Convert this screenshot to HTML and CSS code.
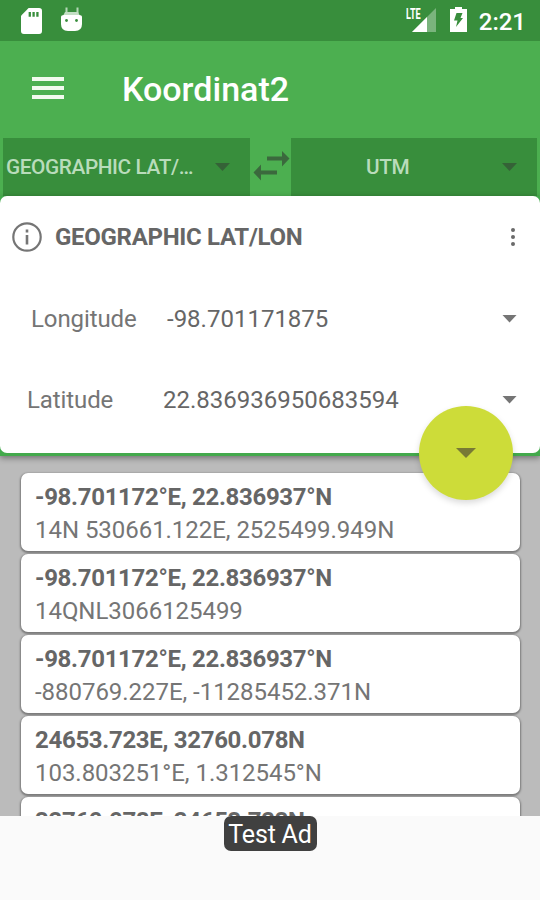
FILE: index.html
```html
<!DOCTYPE html>
<html lang="en">
<head>
    <meta charset="UTF-8">
    <meta name="viewport" content="width=device-width, initial-scale=1.0">
    <title>Koordinat2</title>
    <link rel="stylesheet" href="styles.css">
</head>
<body>
    <!-- Status bar -->
    <div class="status-bar">
        <svg class="sd-icon" width="21" height="26" viewBox="0 0 22 27">
            <path d="M8 0h11a3 3 0 0 1 3 3v21a3 3 0 0 1-3 3H3a3 3 0 0 1-3-3V8z" fill="#fff"/>
            <path d="M8 4h2.400v5H8zM12 4h2.400v5H12zM16 4h2.400v5H16z" fill="#388e3c"/>
        </svg>
        <svg class="robot-icon" width="21" height="25" viewBox="0 0 21 25">
            <path d="M5.500 0.500v6M16.500 0.500v6" stroke="#b5d8b7" stroke-width="2"/>
            <path d="M4 5h13l2 4H2z" fill="#c3dfc4"/>
            <path d="M0 10q0-2 3-2h15q3 0 3 2v7q0 7-7 7H7q-7 0-7-7z" fill="#fff"/>
            <circle cx="5.500" cy="13.500" r="1.400" fill="#388e3c"/>
            <circle cx="15.500" cy="13.500" r="1.400" fill="#388e3c"/>
        </svg>
        <div class="signal">
            <span class="lte">LTE</span>
            <svg width="24" height="24" viewBox="0 0 24 24">
                <path d="M24 0v24H0z" fill="#7ab47d"/>
                <path d="M15 9v15H0z" fill="#fff"/>
            </svg>
        </div>
        <svg class="battery-icon" width="17" height="25" viewBox="0 0 17 25">
            <path d="M5 0h7v2h5v23H0V2h5z" fill="#fff"/>
            <path d="M6.500 6h6l-2 5H13L6 20l1.500-6.500H4z" fill="#388e3c"/>
        </svg>
        <span class="clock">2:21</span>
    </div>

    <!-- Toolbar -->
    <div class="toolbar">
        <div class="menu-icon"><span></span><span></span><span></span></div>
        <h1>Koordinat2</h1>
    </div>

    <!-- Coordinate system pickers -->
    <div class="pickers">
        <div class="picker picker-from">
            <span class="picker-text">GEOGRAPHIC LAT/…</span>
            <span class="arrow"></span>
        </div>
        <svg class="swap-icon" width="37" height="30" viewBox="0 0 37 30">
            <path d="M14 7.500h16M7 21.500h17" stroke="#3b693d" stroke-width="4"/>
            <path d="M29 0l7.500 7.500-7.500 8zM8 13.500v16l-7.500-8z" fill="#3b693d"/>
        </svg>
        <div class="picker picker-to">
            <span class="picker-text">UTM</span>
            <span class="arrow"></span>
        </div>
    </div>

    <!-- Input card -->
    <div class="input-wrap">
        <div class="input-card">
            <div class="card-header">
                <svg width="30" height="30" viewBox="0 0 30 30">
                    <circle cx="15" cy="15" r="13.700" fill="none" stroke="#757575" stroke-width="2.200"/>
                    <path d="M15 13v9.500M15 7.500v3" stroke="#757575" stroke-width="2.600"/>
                </svg>
                <h2>GEOGRAPHIC LAT/LON</h2>
                <div class="more"><i></i><i></i><i></i></div>
            </div>
            <div class="field longitude">
                <label>Longitude</label>
                <span class="value">-98.701171875</span>
                <span class="arrow"></span>
            </div>
            <div class="field latitude">
                <label>Latitude</label>
                <span class="value">22.836936950683594</span>
                <span class="arrow"></span>
            </div>
        </div>
        <div class="fab"><span class="arrow"></span></div>
    </div>

    <!-- History -->
    <div class="history">
        <div class="item">
            <b>-98.701172°E, 22.836937°N</b>
            <span>14N 530661.122E, 2525499.949N</span>
        </div>
        <div class="item">
            <b>-98.701172°E, 22.836937°N</b>
            <span>14QNL3066125499</span>
        </div>
        <div class="item">
            <b>-98.701172°E, 22.836937°N</b>
            <span>-880769.227E, -11285452.371N</span>
        </div>
        <div class="item">
            <b>24653.723E, 32760.078N</b>
            <span>103.803251°E, 1.312545°N</span>
        </div>
        <div class="item">
            <b>32760.078E, 24653.723N</b>
        </div>
    </div>

    <div class="ad">
        <span>Test Ad</span>
    </div>
</body>
</html>
```
FILE: styles.css
```css
* {
    box-sizing: border-box;
}
body {
    margin: 0;
    width: 540px;
    height: 900px;
    display: flex;
    flex-direction: column;
    overflow: hidden;
    font-family: Roboto, sans-serif;
    background-color: #bbb;
    color: #666;
}
h1, h2 {
    margin: 0;
    font-weight: 500;
}
.status-bar {
    height: 41px;
    flex: none;
    display: flex;
    align-items: flex-start;
    padding: 7px 14px 0 21px;
    background-color: #388e3c;
    color: white;
}
.sd-icon {
    margin-top: 1px;
}
.robot-icon {
    margin-left: 19px;
}
.signal {
    position: relative;
    margin-left: auto;
    margin-top: 1px;
    height: 24px;
}
.lte {
    position: absolute;
    left: -6px;
    top: 0;
    font-size: 14px;
    line-height: 13px;
    font-weight: 700;
    transform: scaleX(0.65);
    transform-origin: left;
}
.battery-icon {
    margin-left: 14px;
}
.clock {
    margin-left: 12px;
    font-size: 24px;
    line-height: 30px;
    font-weight: 500;
}
.toolbar {
    height: 97px;
    flex: none;
    display: flex;
    align-items: center;
    padding-left: 32px;
    background-color: #4caf50;
    color: white;
}
.menu-icon {
    display: flex;
    flex-direction: column;
    gap: 5px;
    width: 32px;
    margin-bottom: 3px;
}
.menu-icon span {
    height: 4px;
    background-color: #f2faee;
}
.toolbar h1 {
    margin-left: 58px;
    font-size: 34px;
    margin-bottom: 1px;
}
.pickers {
    height: 58px;
    flex: none;
    display: flex;
    padding: 0 3px;
    background-color: #4caf50;
}
.picker {
    display: flex;
    align-items: center;
    background-color: #388e3c;
    color: #b9dcbb;
    font-size: 20.8px;
    letter-spacing: -0.4px;
    font-weight: 500;
}
.picker-from {
    width: 247px;
    padding-left: 3px;
}
.picker-to {
    width: 246px;
}
.picker-text {
    flex: 1;
    white-space: nowrap;
}
.picker-to .picker-text {
    padding-left: 75px;
}
.swap-icon {
    margin: 13px 1px 0 3px;
}
.arrow {
    flex: none;
    width: 15px;
    height: 8px;
    background-color: #757575;
    clip-path: polygon(0 0, 100% 0, 50% 100%);
}
.picker .arrow {
    margin-right: 20px;
    background-color: #356237;
}
.input-wrap {
    position: relative;
    height: 260px;
    flex: none;
    background-color: #43a94c;
    box-shadow: 0 2px 6px rgba(0, 0, 0, 0.4);
    z-index: 1;
}
.input-card {
    height: 257px;
    background-color: white;
    border-radius: 7px;
}
.card-header {
    height: 82px;
    display: flex;
    align-items: center;
    padding: 0 25px 0 12px;
}
.card-header h2 {
    margin-left: 13px;
    font-size: 24px;
    font-weight: 700;
    letter-spacing: -0.3px;
}
.more {
    display: flex;
    flex-direction: column;
    gap: 3px;
    margin-left: auto;
}
.more i {
    width: 4px;
    height: 4px;
    border-radius: 50%;
    background-color: #6a6a6a;
}
.field {
    height: 81px;
    display: flex;
    align-items: center;
    padding-right: 23px;
    font-size: 24px;
}
.field label {
    color: #757575;
    width: 136px;
    letter-spacing: -0.1px;
}
.longitude {
    padding-left: 31px;
}
.latitude {
    padding-left: 27px;
}
.value {
    flex: 1;
}
.fab {
    position: absolute;
    left: 419px;
    top: 210px;
    width: 94px;
    height: 94px;
    display: flex;
    align-items: center;
    justify-content: center;
    border-radius: 50%;
    background-color: #cddc39;
    box-shadow: 0 3px 6px rgba(0, 0, 0, 0.15);
}
.fab .arrow {
    width: 20px;
    height: 10px;
    background-color: #787a35;
}
.history {
    flex: 1;
    min-height: 0;
    overflow: hidden;
    padding: 17px 20px 0 21px;
}
.item {
    display: flex;
    flex-direction: column;
    height: 78px;
    margin-bottom: 3px;
    padding: 8px 14px;
    border-radius: 7px;
    background-color: white;
    box-shadow: 0 1px 2px 1px rgba(0, 0, 0, 0.35);
    font-size: 24px;
    line-height: 33px;
}
.item b {
    letter-spacing: -0.31px;
}
.item span {
    color: #757575;
    letter-spacing: -0.04px;
}
.ad {
    height: 84px;
    flex: none;
    display: flex;
    justify-content: center;
    align-items: flex-start;
    background-color: #fafafa;
}
.ad span {
    width: 93px;
    height: 35px;
    border-radius: 7px;
    background-color: #404040;
    color: white;
    font-size: 25px;
    letter-spacing: -0.2px;
    line-height: 37px;
    text-align: center;
    white-space: nowrap;
}
```
